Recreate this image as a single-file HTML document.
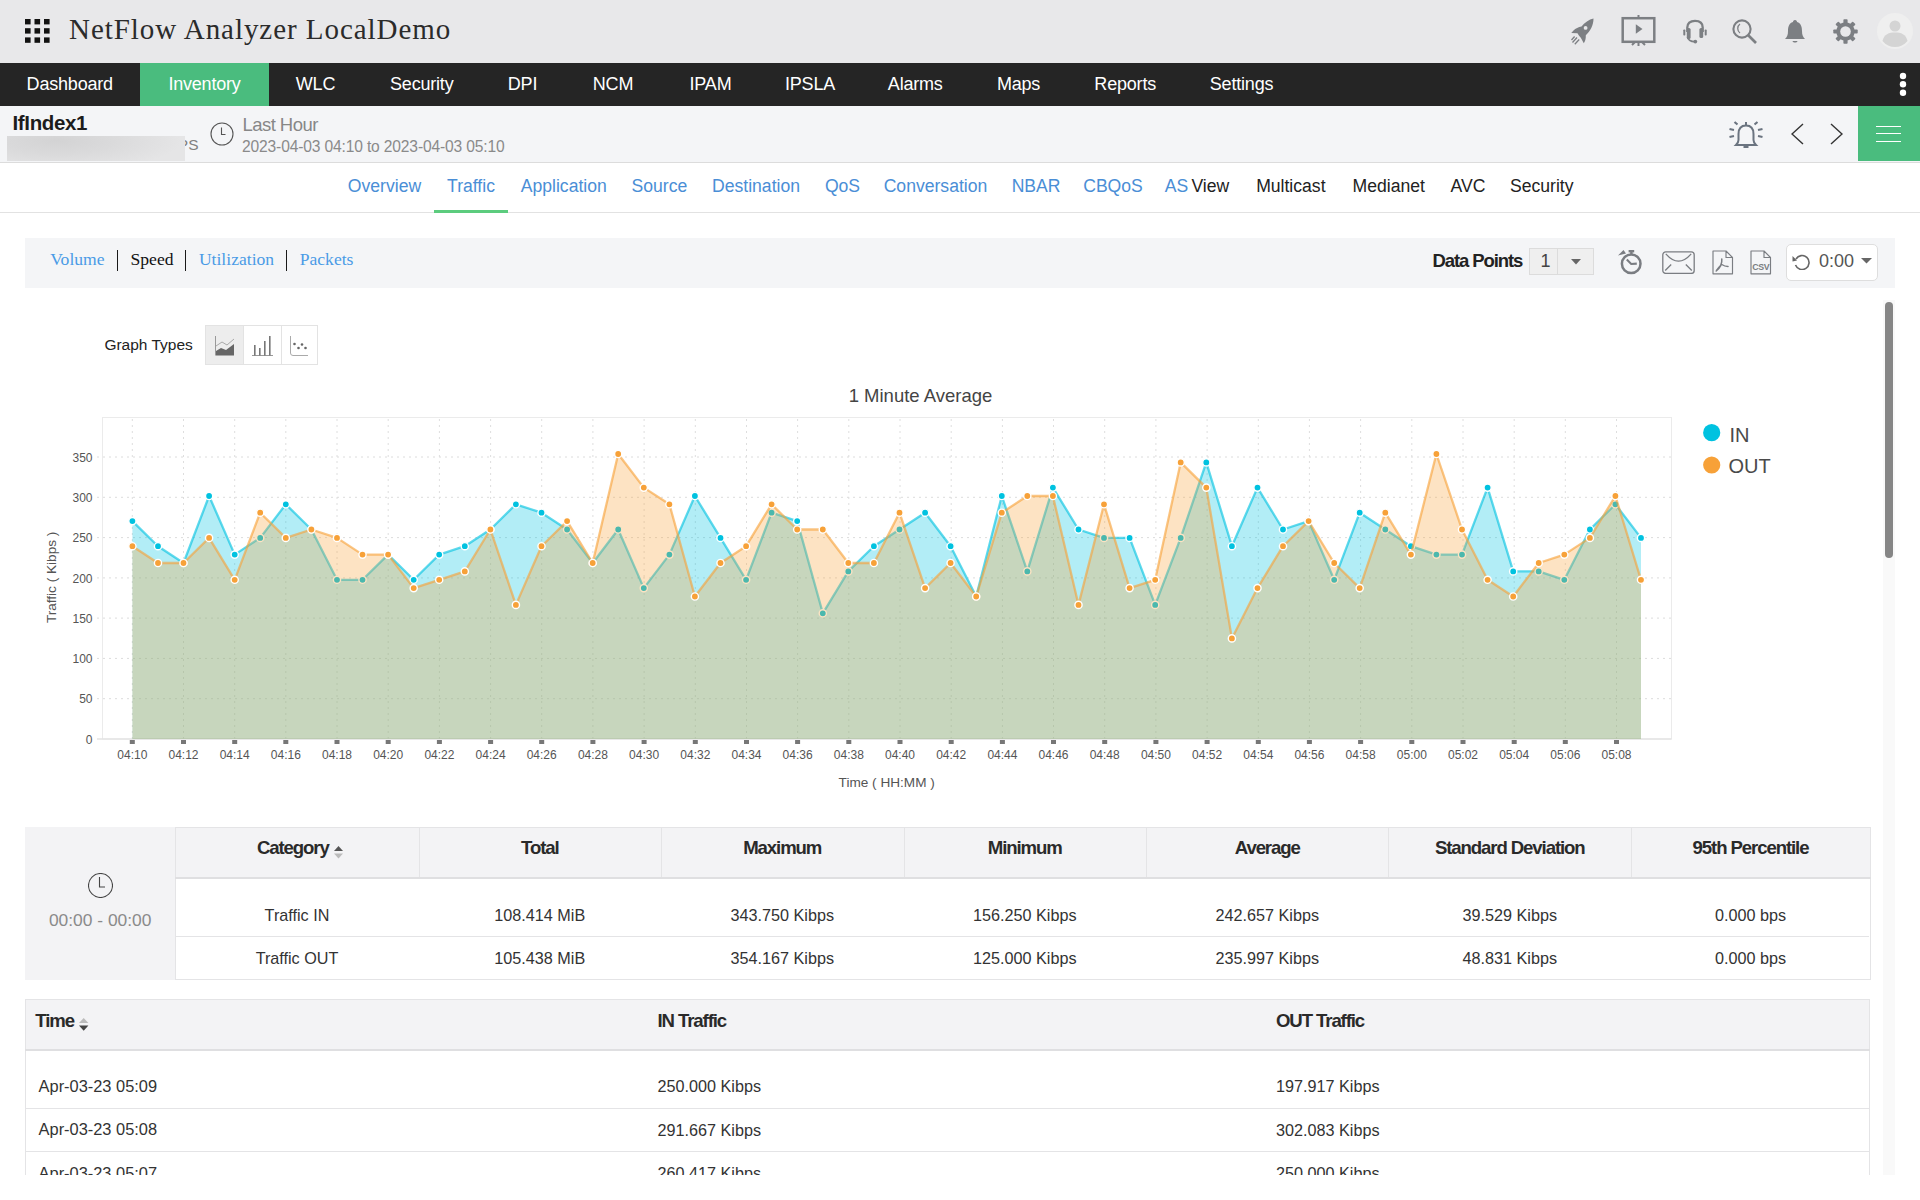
<!DOCTYPE html>
<html><head><meta charset="utf-8"><title>NetFlow Analyzer</title>
<style>
html,body{margin:0;padding:0;width:1920px;height:1200px;overflow:hidden;background:#fff;font-family:'Liberation Sans', sans-serif;}
.t{position:absolute;white-space:nowrap;}
.r{position:absolute;display:block;}
</style></head><body>
<div class="r" style="left:0px;top:0px;width:1920px;height:63px;background:#e8e8ea;"></div>
<svg class="r" style="left:24.5px;top:19px" width="26" height="25" viewBox="0 0 26 25"><rect x="0.0" y="0.0" width="5.6" height="5.4" fill="#111"/><rect x="0.0" y="9.2" width="5.6" height="5.4" fill="#111"/><rect x="0.0" y="18.4" width="5.6" height="5.4" fill="#111"/><rect x="9.5" y="0.0" width="5.6" height="5.4" fill="#111"/><rect x="9.5" y="9.2" width="5.6" height="5.4" fill="#111"/><rect x="9.5" y="18.4" width="5.6" height="5.4" fill="#111"/><rect x="19.0" y="0.0" width="5.6" height="5.4" fill="#111"/><rect x="19.0" y="9.2" width="5.6" height="5.4" fill="#111"/><rect x="19.0" y="18.4" width="5.6" height="5.4" fill="#111"/></svg>
<div class="t" style="top:12.11px;font-size:29px;line-height:34.8px;color:#2b2b2b;font-family:'Liberation Serif', serif;letter-spacing:0.95px;left:69px;">NetFlow Analyzer LocalDemo</div>
<svg class="r" style="left:1570px;top:17.5px" width="26" height="28" viewBox="0 0 26 28"><path d="M23.5 0.5 C19 1.5 14.5 4.5 11.5 8.5 C8.5 9 5.5 10.5 3.5 12.5 C2.5 13.5 1.8 14.5 1.3 15 L7.5 15.3 C8.5 17 9.5 18.5 10.8 19.8 L13.8 25.3 C15 23.5 16 21 15.8 17.2 C20.5 13 23.5 7 23.5 0.5 Z" fill="#7c7f83"/>
<circle cx="15.6" cy="9.9" r="1.9" fill="#e8e8ea"/>
<path d="M7 19.5 L2.5 24.5 M9.2 21.5 L4.8 26.3 M4.6 18.5 L1.5 22" stroke="#7c7f83" stroke-width="1.3"/></svg>
<svg class="r" style="left:1621px;top:15px" width="36" height="32" viewBox="0 0 36 32"><rect x="1.7" y="3.2" width="31.6" height="23.6" fill="none" stroke="#7c7f83" stroke-width="2.5"/>
<path d="M17.5 0 V3 M17.5 27 V31 M11 30 L14 27 M24 30 L21 27" stroke="#7c7f83" stroke-width="2"/>
<path d="M14.8 9.2 L21.5 14 L14.8 18.8 Z" fill="#7c7f83"/></svg>
<svg class="r" style="left:1683px;top:19px" width="25" height="26" viewBox="0 0 25 26"><path d="M4.3 13 V8.5 C4.3 4.5 7 1.8 12 1.8 C17 1.8 19.7 4.5 19.7 8.5 V13" fill="none" stroke="#7c7f83" stroke-width="2.3"/>
<rect x="3.8" y="9" width="3.8" height="11" rx="1.6" fill="#7c7f83"/><rect x="16.4" y="9" width="3.8" height="10" rx="1.6" fill="#7c7f83"/>
<rect x="0.3" y="10.5" width="2" height="6" rx="0.8" fill="#7c7f83"/><rect x="21.7" y="10.5" width="2" height="6" rx="0.8" fill="#7c7f83"/>
<path d="M4.5 18 C5 21 7.5 22.5 12 22.8" fill="none" stroke="#7c7f83" stroke-width="1.6"/>
<circle cx="12.3" cy="22.6" r="1.9" fill="#7c7f83"/></svg>
<svg class="r" style="left:1732px;top:19px" width="26" height="26" viewBox="0 0 26 26"><circle cx="10" cy="10" r="8.6" fill="none" stroke="#7c7f83" stroke-width="2.1"/>
<path d="M16 16 L24 24" stroke="#7c7f83" stroke-width="2.6"/>
<path d="M8 5 C5 7 5 12 8 14" fill="none" stroke="#7c7f83" stroke-width="1.3"/></svg>
<svg class="r" style="left:1785px;top:19px" width="21" height="25" viewBox="0 0 21 25"><path d="M10 1 C11.5 1 12 2 12 3 C16 4 17 8 17 12 C17 16 18 18 20 20 H0 C2 18 3 16 3 12 C3 8 4 4 8 3 C8 2 8.5 1 10 1 Z" fill="#7c7f83"/>
<path d="M7.5 22 C8 24 12 24 12.5 22 Z" fill="#7c7f83"/></svg>
<svg class="r" style="left:1833px;top:19px" width="25" height="25" viewBox="0 0 25 25"><rect x="10.4" y="0.3" width="4.2" height="6" rx="0.8" fill="#7c7f83" transform="rotate(0 12.5 12.5)"/><rect x="10.4" y="0.3" width="4.2" height="6" rx="0.8" fill="#7c7f83" transform="rotate(45 12.5 12.5)"/><rect x="10.4" y="0.3" width="4.2" height="6" rx="0.8" fill="#7c7f83" transform="rotate(90 12.5 12.5)"/><rect x="10.4" y="0.3" width="4.2" height="6" rx="0.8" fill="#7c7f83" transform="rotate(135 12.5 12.5)"/><rect x="10.4" y="0.3" width="4.2" height="6" rx="0.8" fill="#7c7f83" transform="rotate(180 12.5 12.5)"/><rect x="10.4" y="0.3" width="4.2" height="6" rx="0.8" fill="#7c7f83" transform="rotate(225 12.5 12.5)"/><rect x="10.4" y="0.3" width="4.2" height="6" rx="0.8" fill="#7c7f83" transform="rotate(270 12.5 12.5)"/><rect x="10.4" y="0.3" width="4.2" height="6" rx="0.8" fill="#7c7f83" transform="rotate(315 12.5 12.5)"/><circle cx="12.5" cy="12.5" r="9.2" fill="#7c7f83"/><circle cx="12.5" cy="12.5" r="5.3" fill="#e8e8ea"/></svg>
<svg class="r" style="left:1877px;top:13px" width="36" height="36" viewBox="0 0 36 36"><circle cx="18" cy="18" r="18" fill="#efefef"/>
<circle cx="18" cy="13" r="5.5" fill="#d4d4d4"/>
<path d="M5.5 28 C7 21 12 19.5 18 19.5 C24 19.5 29 21 30.5 28 C27 32 23 34 18 34 C13 34 9 32 5.5 28 Z" fill="#d4d4d4"/></svg>
<div class="r" style="left:0px;top:63px;width:1920px;height:43px;background:#252525;"></div>
<div class="r" style="left:140px;top:63px;width:129px;height:43px;background:#4abc7e;"></div>
<div class="t" style="top:73.96px;font-size:18px;line-height:21.6px;color:#ffffff;font-family:'Liberation Sans', sans-serif;letter-spacing:-0.2px;left:-30.25px;width:200px;text-align:center;">Dashboard</div>
<div class="t" style="top:73.96px;font-size:18px;line-height:21.6px;color:#ffffff;font-family:'Liberation Sans', sans-serif;letter-spacing:-0.2px;left:104.50px;width:200px;text-align:center;">Inventory</div>
<div class="t" style="top:73.96px;font-size:18px;line-height:21.6px;color:#ffffff;font-family:'Liberation Sans', sans-serif;letter-spacing:-0.2px;left:215.50px;width:200px;text-align:center;">WLC</div>
<div class="t" style="top:73.96px;font-size:18px;line-height:21.6px;color:#ffffff;font-family:'Liberation Sans', sans-serif;letter-spacing:-0.2px;left:321.75px;width:200px;text-align:center;">Security</div>
<div class="t" style="top:73.96px;font-size:18px;line-height:21.6px;color:#ffffff;font-family:'Liberation Sans', sans-serif;letter-spacing:-0.2px;left:422.50px;width:200px;text-align:center;">DPI</div>
<div class="t" style="top:73.96px;font-size:18px;line-height:21.6px;color:#ffffff;font-family:'Liberation Sans', sans-serif;letter-spacing:-0.2px;left:513.00px;width:200px;text-align:center;">NCM</div>
<div class="t" style="top:73.96px;font-size:18px;line-height:21.6px;color:#ffffff;font-family:'Liberation Sans', sans-serif;letter-spacing:-0.2px;left:610.50px;width:200px;text-align:center;">IPAM</div>
<div class="t" style="top:73.96px;font-size:18px;line-height:21.6px;color:#ffffff;font-family:'Liberation Sans', sans-serif;letter-spacing:-0.2px;left:710.00px;width:200px;text-align:center;">IPSLA</div>
<div class="t" style="top:73.96px;font-size:18px;line-height:21.6px;color:#ffffff;font-family:'Liberation Sans', sans-serif;letter-spacing:-0.2px;left:815.25px;width:200px;text-align:center;">Alarms</div>
<div class="t" style="top:73.96px;font-size:18px;line-height:21.6px;color:#ffffff;font-family:'Liberation Sans', sans-serif;letter-spacing:-0.2px;left:918.50px;width:200px;text-align:center;">Maps</div>
<div class="t" style="top:73.96px;font-size:18px;line-height:21.6px;color:#ffffff;font-family:'Liberation Sans', sans-serif;letter-spacing:-0.2px;left:1025.20px;width:200px;text-align:center;">Reports</div>
<div class="t" style="top:73.96px;font-size:18px;line-height:21.6px;color:#ffffff;font-family:'Liberation Sans', sans-serif;letter-spacing:-0.2px;left:1141.55px;width:200px;text-align:center;">Settings</div>
<svg class="r" style="left:1899px;top:72px" width="8" height="25" viewBox="0 0 8 25"><circle cx="4" cy="4" r="3.2" fill="#fff"/><circle cx="4" cy="12.3" r="3.2" fill="#fff"/><circle cx="4" cy="20.8" r="3.2" fill="#fff"/></svg>
<div class="r" style="left:0px;top:106px;width:1920px;height:56px;background:#f4f5f7;"></div>
<div class="r" style="left:0px;top:162px;width:1920px;height:1px;background:#dcdcdc;"></div>
<div class="t" style="top:111.10px;font-size:20.5px;line-height:24.6px;color:#1c1c1c;font-family:'Liberation Sans', sans-serif;font-weight:700;letter-spacing:-0.35px;left:12.5px;">IfIndex1</div>
<div class="t" style="top:136.33px;font-size:15.5px;line-height:18.6px;color:#808080;font-family:'Liberation Sans', sans-serif;left:138.50px;width:60px;text-align:right;">MBPS</div>
<div class="r" style="left:7px;top:136px;width:178px;height:25px;background:radial-gradient(ellipse 70% 120% at 28% 20%, #d3d3d4 0%, #dadadb 45%, #e5e5e6 100%);filter:blur(0.4px);"></div>
<svg class="r" style="left:210px;top:122px" width="24" height="24" viewBox="0 0 24 24"><circle cx="12" cy="12" r="11" fill="none" stroke="#555" stroke-width="1.1"/><path d="M11.5 5.5 V12.5 H15.5" fill="none" stroke="#555" stroke-width="1.1"/></svg>
<div class="t" style="top:114.29px;font-size:18.5px;line-height:22.2px;color:#878787;font-family:'Liberation Sans', sans-serif;letter-spacing:-0.55px;left:242.5px;">Last Hour</div>
<div class="t" style="top:138.13px;font-size:15.6px;line-height:18.72px;color:#8a8a8a;font-family:'Liberation Sans', sans-serif;letter-spacing:-0.15px;left:242px;">2023-04-03 04:10 to 2023-04-03 05:10</div>
<svg class="r" style="left:1729px;top:120.5px" width="34" height="28" viewBox="0 0 34 28"><path d="M17 4.5 C12 4.5 9.5 8 9.5 13 V19 C9.5 21 8.5 22.5 7 24 H27 C25.5 22.5 24.5 21 24.5 19 V13 C24.5 8 22 4.5 17 4.5 Z" fill="none" stroke="#6b7480" stroke-width="2"/>
<path d="M17 1 V4.5" stroke="#6b7480" stroke-width="2"/>
<path d="M14.5 25 H19.5 V27 H14.5 Z" fill="#6b7480"/>
<path d="M5.5 1 L8.5 3.5 M28.5 1 L25.5 3.5 M0.5 8 L5 9 M33.5 8 L29 9 M0.5 16 L5 15 M33.5 16 L29 15" stroke="#6b7480" stroke-width="2.2"/></svg>
<svg class="r" style="left:1791px;top:123px" width="13" height="22" viewBox="0 0 13 22"><path d="M12 1 L1 11 L12 21" fill="none" stroke="#333" stroke-width="1.4"/></svg>
<svg class="r" style="left:1829.5px;top:123px" width="13" height="22" viewBox="0 0 13 22"><path d="M1 1 L12 11 L1 21" fill="none" stroke="#333" stroke-width="1.4"/></svg>
<div class="r" style="left:1858px;top:106px;width:62px;height:55px;background:#4abc7e;"></div>
<div class="r" style="left:1876px;top:126px;width:25px;height:1.4px;background:#fff;"></div>
<div class="r" style="left:1876px;top:133px;width:25px;height:1.4px;background:#fff;"></div>
<div class="r" style="left:1876px;top:141px;width:25px;height:1.4px;background:#fff;"></div>
<div class="r" style="left:0px;top:212px;width:1920px;height:1px;background:#e2e2e2;"></div>
<div class="t" style="top:176.14px;font-size:17.6px;line-height:21.12px;color:#4a8ed6;font-family:'Liberation Sans', sans-serif;left:284.50px;width:200px;text-align:center;">Overview</div>
<div class="t" style="top:176.14px;font-size:17.6px;line-height:21.12px;color:#4a8ed6;font-family:'Liberation Sans', sans-serif;left:371.00px;width:200px;text-align:center;">Traffic</div>
<div class="t" style="top:176.14px;font-size:17.6px;line-height:21.12px;color:#4a8ed6;font-family:'Liberation Sans', sans-serif;left:463.80px;width:200px;text-align:center;">Application</div>
<div class="t" style="top:176.14px;font-size:17.6px;line-height:21.12px;color:#4a8ed6;font-family:'Liberation Sans', sans-serif;left:559.40px;width:200px;text-align:center;">Source</div>
<div class="t" style="top:176.14px;font-size:17.6px;line-height:21.12px;color:#4a8ed6;font-family:'Liberation Sans', sans-serif;left:656.00px;width:200px;text-align:center;">Destination</div>
<div class="t" style="top:176.14px;font-size:17.6px;line-height:21.12px;color:#4a8ed6;font-family:'Liberation Sans', sans-serif;left:742.50px;width:200px;text-align:center;">QoS</div>
<div class="t" style="top:176.14px;font-size:17.6px;line-height:21.12px;color:#4a8ed6;font-family:'Liberation Sans', sans-serif;left:835.50px;width:200px;text-align:center;">Conversation</div>
<div class="t" style="top:176.14px;font-size:17.6px;line-height:21.12px;color:#4a8ed6;font-family:'Liberation Sans', sans-serif;left:936.10px;width:200px;text-align:center;">NBAR</div>
<div class="t" style="top:176.14px;font-size:17.6px;line-height:21.12px;color:#4a8ed6;font-family:'Liberation Sans', sans-serif;left:1013.00px;width:200px;text-align:center;">CBQoS</div>
<div class="t" style="top:176.14px;font-size:17.6px;line-height:21.12px;color:#4a8ed6;font-family:'Liberation Sans', sans-serif;left:1146.50px;width:60px;text-align:center;">AS</div>
<div class="t" style="top:176.14px;font-size:17.6px;line-height:21.12px;color:#222;font-family:'Liberation Sans', sans-serif;left:1110.30px;width:200px;text-align:center;">View</div>
<div class="t" style="top:176.14px;font-size:17.6px;line-height:21.12px;color:#222;font-family:'Liberation Sans', sans-serif;left:1190.85px;width:200px;text-align:center;">Multicast</div>
<div class="t" style="top:176.14px;font-size:17.6px;line-height:21.12px;color:#222;font-family:'Liberation Sans', sans-serif;left:1288.80px;width:200px;text-align:center;">Medianet</div>
<div class="t" style="top:176.14px;font-size:17.6px;line-height:21.12px;color:#222;font-family:'Liberation Sans', sans-serif;left:1368.00px;width:200px;text-align:center;">AVC</div>
<div class="t" style="top:176.14px;font-size:17.6px;line-height:21.12px;color:#222;font-family:'Liberation Sans', sans-serif;left:1441.75px;width:200px;text-align:center;">Security</div>
<div class="r" style="left:434px;top:210px;width:74px;height:3px;background:#5ccc7e;"></div>
<div class="r" style="left:25px;top:238px;width:1870px;height:50px;background:#f4f5f7;"></div>
<div class="t" style="top:249.10px;font-size:17.6px;line-height:21.12px;color:#4a9be6;font-family:'Liberation Serif', serif;left:-2.60px;width:160px;text-align:center;">Volume</div>
<div class="t" style="top:249.10px;font-size:17.6px;line-height:21.12px;color:#111;font-family:'Liberation Serif', serif;left:72.00px;width:160px;text-align:center;">Speed</div>
<div class="t" style="top:249.10px;font-size:17.6px;line-height:21.12px;color:#4a9be6;font-family:'Liberation Serif', serif;left:156.50px;width:160px;text-align:center;">Utilization</div>
<div class="t" style="top:249.10px;font-size:17.6px;line-height:21.12px;color:#4a9be6;font-family:'Liberation Serif', serif;left:246.60px;width:160px;text-align:center;">Packets</div>
<div class="r" style="left:117px;top:250px;width:1.2px;height:21px;background:#1a1a1a;"></div>
<div class="r" style="left:185px;top:250px;width:1.2px;height:21px;background:#1a1a1a;"></div>
<div class="r" style="left:286px;top:250px;width:1.2px;height:21px;background:#1a1a1a;"></div>
<div class="t" style="top:249.99px;font-size:18.5px;line-height:22.2px;color:#222;font-family:'Liberation Sans', sans-serif;font-weight:700;letter-spacing:-1.1px;left:1432.5px;">Data Points</div>
<div class="r" style="left:1529px;top:248px;width:65px;height:27px;background:#efefef;box-sizing:border-box;border:1px solid #dcdcdc;"></div>
<div class="r" style="left:1557px;top:248px;width:1px;height:27px;background:#dcdcdc;"></div>
<div class="t" style="top:251.46px;font-size:18px;line-height:21.6px;color:#444;font-family:'Liberation Sans', sans-serif;left:1535.50px;width:20px;text-align:center;">1</div>
<svg class="r" style="left:1571px;top:259px" width="10" height="6" viewBox="0 0 10 6"><path d="M0 0 H10 L5 5.5 Z" fill="#666"/></svg>
<svg class="r" style="left:1617px;top:249.5px" width="27" height="25" viewBox="0 0 27 25"><circle cx="14.2" cy="13.8" r="9.3" fill="none" stroke="#7a7d82" stroke-width="2.5"/>
<path d="M9.8 9.6 L14.2 14 L19.8 13.6" fill="none" stroke="#7a7d82" stroke-width="2.1"/>
<path d="M1 5.5 L6.5 0 L9 3.5 Z" fill="#7a7d82"/>
<rect x="11.6" y="-0.2" width="5.6" height="2.6" fill="#7a7d82"/><rect x="13.2" y="2" width="2.4" height="2.6" fill="#7a7d82"/></svg>
<svg class="r" style="left:1662px;top:251px" width="33" height="23" viewBox="0 0 33 23"><rect x="0.8" y="0.8" width="31.4" height="21.6" rx="3" fill="none" stroke="#7a7d82" stroke-width="1.3"/>
<path d="M3.8 2.9 Q16.5 17.5 29.2 2.9 M3.2 19.5 L9.2 13.5 M29.8 19.5 L23.8 13.5" fill="none" stroke="#7a7d82" stroke-width="1.3"/></svg>
<svg class="r" style="left:1712px;top:249.5px" width="22" height="25" viewBox="0 0 22 25"><path d="M1 1 H14 L20.5 7.5 V23.8 H1 Z M14 1 V7.5 H20.5" fill="none" stroke="#7a7d82" stroke-width="1.15" stroke-linejoin="round"/>
<path d="M9.8 9 C10.2 13 9 17 4.2 21 M9.8 14.5 C12 16 14 16.5 16 16.5 M9.5 14.5 C8 16 7 17 4.5 20.5" fill="none" stroke="#7a7d82" stroke-width="1.5" stroke-linecap="round"/></svg>
<svg class="r" style="left:1750px;top:249.5px" width="22" height="25" viewBox="0 0 22 25"><path d="M1 1 H14 L20.5 7.5 V23.8 H1 Z M14 1 V7.5 H20.5" fill="none" stroke="#7a7d82" stroke-width="1.15" stroke-linejoin="round"/>
<text x="10.8" y="20.3" font-family="Liberation Sans" font-weight="700" font-size="8.8" letter-spacing="-0.4" fill="#7a7d82" text-anchor="middle">CSV</text></svg>
<div class="r" style="left:1786px;top:244px;width:92px;height:36.5px;background:#ffffff;box-sizing:border-box;border:1px solid #dedede;border-radius:5px;"></div>
<svg class="r" style="left:1792px;top:253px" width="18" height="17" viewBox="0 0 18 17"><path d="M4 6 A7 7 0 1 1 3.5 12" fill="none" stroke="#666" stroke-width="1.6"/>
<path d="M0.5 3 L5 7.5 L0.5 8.5 Z" fill="#666"/></svg>
<div class="t" style="top:250.96px;font-size:18px;line-height:21.6px;color:#555;font-family:'Liberation Sans', sans-serif;left:1811.50px;width:50px;text-align:center;">0:00</div>
<svg class="r" style="left:1861px;top:258px" width="11" height="6" viewBox="0 0 11 6"><path d="M0 0 H11 L5.5 5.5 Z" fill="#666"/></svg>
<div class="r" style="left:1883px;top:300px;width:12px;height:875px;background:#f9f9f9;"></div>
<div class="r" style="left:1885px;top:302px;width:8px;height:256px;background:#868686;border-radius:4px;"></div>
<div class="t" style="top:335.73px;font-size:15.5px;line-height:18.6px;color:#222;font-family:'Liberation Sans', sans-serif;left:104.4px;">Graph Types</div>
<div class="r" style="left:205px;top:325px;width:113px;height:40px;background:#fff;box-sizing:border-box;border:1px solid #e3e3e3;"></div>
<div class="r" style="left:206px;top:326px;width:36.5px;height:38px;background:#ededed;"></div>
<div class="r" style="left:242.5px;top:326px;width:1px;height:38px;background:#e3e3e3;"></div>
<div class="r" style="left:280.5px;top:326px;width:1px;height:38px;background:#e3e3e3;"></div>
<svg class="r" style="left:215px;top:336px" width="20" height="20" viewBox="0 0 20 20"><path d="M0.5 0 V19.5" stroke="#999" stroke-width="1"/>
<path d="M1 10 L7 6 L12 9 L19 3" fill="none" stroke="#aaa" stroke-width="1"/>
<path d="M1 19.5 V15 L6 12 L11 14 L19 8 V19.5 Z" fill="#666"/></svg>
<svg class="r" style="left:252px;top:336px" width="21" height="20" viewBox="0 0 21 20"><path d="M0 19.5 H21" stroke="#999" stroke-width="1"/>
<rect x="2" y="9" width="1.6" height="10.5" fill="#777"/><rect x="7" y="12" width="1.6" height="7.5" fill="#777"/>
<rect x="12" y="5" width="1.6" height="14.5" fill="#777"/><rect x="17" y="0" width="1.6" height="19.5" fill="#777"/></svg>
<svg class="r" style="left:289.5px;top:336px" width="19" height="20" viewBox="0 0 19 20"><path d="M0.5 0 V17 Q0.5 19.5 3 19.5 H18" fill="none" stroke="#aaa" stroke-width="1"/>
<circle cx="4.5" cy="8" r="1.3" fill="#666"/><circle cx="8.5" cy="12" r="1.3" fill="#666"/><circle cx="12" cy="8.5" r="1.3" fill="#666"/><circle cx="15.5" cy="12" r="1.3" fill="#666"/></svg>
<svg class="r" style="left:0;top:370px" width="1880" height="430" viewBox="0 370 1880 430"><rect x="102.5" y="417.5" width="1569.0" height="321.5" fill="none" stroke="#ebebeb" stroke-width="1"/><path d="M97 739 H1671.5" stroke="#e3e3e3" stroke-width="1.5"/><text x="92.5" y="743.6" text-anchor="end" font-family="Liberation Sans" font-size="12" fill="#555">0</text><path d="M97 698.7 H1671.5" stroke="#dcdcdc" stroke-width="1" stroke-dasharray="2,4"/><text x="92.5" y="703.3" text-anchor="end" font-family="Liberation Sans" font-size="12" fill="#555">50</text><path d="M97 658.4 H1671.5" stroke="#dcdcdc" stroke-width="1" stroke-dasharray="2,4"/><text x="92.5" y="663.0" text-anchor="end" font-family="Liberation Sans" font-size="12" fill="#555">100</text><path d="M97 618.1 H1671.5" stroke="#dcdcdc" stroke-width="1" stroke-dasharray="2,4"/><text x="92.5" y="622.7" text-anchor="end" font-family="Liberation Sans" font-size="12" fill="#555">150</text><path d="M97 577.9 H1671.5" stroke="#dcdcdc" stroke-width="1" stroke-dasharray="2,4"/><text x="92.5" y="582.5" text-anchor="end" font-family="Liberation Sans" font-size="12" fill="#555">200</text><path d="M97 537.6 H1671.5" stroke="#dcdcdc" stroke-width="1" stroke-dasharray="2,4"/><text x="92.5" y="542.2" text-anchor="end" font-family="Liberation Sans" font-size="12" fill="#555">250</text><path d="M97 497.3 H1671.5" stroke="#dcdcdc" stroke-width="1" stroke-dasharray="2,4"/><text x="92.5" y="501.9" text-anchor="end" font-family="Liberation Sans" font-size="12" fill="#555">300</text><path d="M97 457.0 H1671.5" stroke="#dcdcdc" stroke-width="1" stroke-dasharray="2,4"/><text x="92.5" y="461.6" text-anchor="end" font-family="Liberation Sans" font-size="12" fill="#555">350</text><path d="M132.3 419.0 V739" stroke="#dedede" stroke-width="1" stroke-dasharray="2,4"/><rect x="129.8" y="740" width="5" height="4" fill="#777"/><text x="132.3" y="758.8" text-anchor="middle" font-family="Liberation Sans" font-size="12" fill="#555">04:10</text><path d="M183.5 419.0 V739" stroke="#dedede" stroke-width="1" stroke-dasharray="2,4"/><rect x="181.0" y="740" width="5" height="4" fill="#777"/><text x="183.5" y="758.8" text-anchor="middle" font-family="Liberation Sans" font-size="12" fill="#555">04:12</text><path d="M234.7 419.0 V739" stroke="#dedede" stroke-width="1" stroke-dasharray="2,4"/><rect x="232.2" y="740" width="5" height="4" fill="#777"/><text x="234.7" y="758.8" text-anchor="middle" font-family="Liberation Sans" font-size="12" fill="#555">04:14</text><path d="M285.8 419.0 V739" stroke="#dedede" stroke-width="1" stroke-dasharray="2,4"/><rect x="283.3" y="740" width="5" height="4" fill="#777"/><text x="285.8" y="758.8" text-anchor="middle" font-family="Liberation Sans" font-size="12" fill="#555">04:16</text><path d="M337.0 419.0 V739" stroke="#dedede" stroke-width="1" stroke-dasharray="2,4"/><rect x="334.5" y="740" width="5" height="4" fill="#777"/><text x="337.0" y="758.8" text-anchor="middle" font-family="Liberation Sans" font-size="12" fill="#555">04:18</text><path d="M388.2 419.0 V739" stroke="#dedede" stroke-width="1" stroke-dasharray="2,4"/><rect x="385.7" y="740" width="5" height="4" fill="#777"/><text x="388.2" y="758.8" text-anchor="middle" font-family="Liberation Sans" font-size="12" fill="#555">04:20</text><path d="M439.4 419.0 V739" stroke="#dedede" stroke-width="1" stroke-dasharray="2,4"/><rect x="436.9" y="740" width="5" height="4" fill="#777"/><text x="439.4" y="758.8" text-anchor="middle" font-family="Liberation Sans" font-size="12" fill="#555">04:22</text><path d="M490.6 419.0 V739" stroke="#dedede" stroke-width="1" stroke-dasharray="2,4"/><rect x="488.1" y="740" width="5" height="4" fill="#777"/><text x="490.6" y="758.8" text-anchor="middle" font-family="Liberation Sans" font-size="12" fill="#555">04:24</text><path d="M541.7 419.0 V739" stroke="#dedede" stroke-width="1" stroke-dasharray="2,4"/><rect x="539.2" y="740" width="5" height="4" fill="#777"/><text x="541.7" y="758.8" text-anchor="middle" font-family="Liberation Sans" font-size="12" fill="#555">04:26</text><path d="M592.9 419.0 V739" stroke="#dedede" stroke-width="1" stroke-dasharray="2,4"/><rect x="590.4" y="740" width="5" height="4" fill="#777"/><text x="592.9" y="758.8" text-anchor="middle" font-family="Liberation Sans" font-size="12" fill="#555">04:28</text><path d="M644.1 419.0 V739" stroke="#dedede" stroke-width="1" stroke-dasharray="2,4"/><rect x="641.6" y="740" width="5" height="4" fill="#777"/><text x="644.1" y="758.8" text-anchor="middle" font-family="Liberation Sans" font-size="12" fill="#555">04:30</text><path d="M695.3 419.0 V739" stroke="#dedede" stroke-width="1" stroke-dasharray="2,4"/><rect x="692.8" y="740" width="5" height="4" fill="#777"/><text x="695.3" y="758.8" text-anchor="middle" font-family="Liberation Sans" font-size="12" fill="#555">04:32</text><path d="M746.5 419.0 V739" stroke="#dedede" stroke-width="1" stroke-dasharray="2,4"/><rect x="744.0" y="740" width="5" height="4" fill="#777"/><text x="746.5" y="758.8" text-anchor="middle" font-family="Liberation Sans" font-size="12" fill="#555">04:34</text><path d="M797.6 419.0 V739" stroke="#dedede" stroke-width="1" stroke-dasharray="2,4"/><rect x="795.1" y="740" width="5" height="4" fill="#777"/><text x="797.6" y="758.8" text-anchor="middle" font-family="Liberation Sans" font-size="12" fill="#555">04:36</text><path d="M848.8 419.0 V739" stroke="#dedede" stroke-width="1" stroke-dasharray="2,4"/><rect x="846.3" y="740" width="5" height="4" fill="#777"/><text x="848.8" y="758.8" text-anchor="middle" font-family="Liberation Sans" font-size="12" fill="#555">04:38</text><path d="M900.0 419.0 V739" stroke="#dedede" stroke-width="1" stroke-dasharray="2,4"/><rect x="897.5" y="740" width="5" height="4" fill="#777"/><text x="900.0" y="758.8" text-anchor="middle" font-family="Liberation Sans" font-size="12" fill="#555">04:40</text><path d="M951.2 419.0 V739" stroke="#dedede" stroke-width="1" stroke-dasharray="2,4"/><rect x="948.7" y="740" width="5" height="4" fill="#777"/><text x="951.2" y="758.8" text-anchor="middle" font-family="Liberation Sans" font-size="12" fill="#555">04:42</text><path d="M1002.4 419.0 V739" stroke="#dedede" stroke-width="1" stroke-dasharray="2,4"/><rect x="999.9" y="740" width="5" height="4" fill="#777"/><text x="1002.4" y="758.8" text-anchor="middle" font-family="Liberation Sans" font-size="12" fill="#555">04:44</text><path d="M1053.5 419.0 V739" stroke="#dedede" stroke-width="1" stroke-dasharray="2,4"/><rect x="1051.0" y="740" width="5" height="4" fill="#777"/><text x="1053.5" y="758.8" text-anchor="middle" font-family="Liberation Sans" font-size="12" fill="#555">04:46</text><path d="M1104.7 419.0 V739" stroke="#dedede" stroke-width="1" stroke-dasharray="2,4"/><rect x="1102.2" y="740" width="5" height="4" fill="#777"/><text x="1104.7" y="758.8" text-anchor="middle" font-family="Liberation Sans" font-size="12" fill="#555">04:48</text><path d="M1155.9 419.0 V739" stroke="#dedede" stroke-width="1" stroke-dasharray="2,4"/><rect x="1153.4" y="740" width="5" height="4" fill="#777"/><text x="1155.9" y="758.8" text-anchor="middle" font-family="Liberation Sans" font-size="12" fill="#555">04:50</text><path d="M1207.1 419.0 V739" stroke="#dedede" stroke-width="1" stroke-dasharray="2,4"/><rect x="1204.6" y="740" width="5" height="4" fill="#777"/><text x="1207.1" y="758.8" text-anchor="middle" font-family="Liberation Sans" font-size="12" fill="#555">04:52</text><path d="M1258.3 419.0 V739" stroke="#dedede" stroke-width="1" stroke-dasharray="2,4"/><rect x="1255.8" y="740" width="5" height="4" fill="#777"/><text x="1258.3" y="758.8" text-anchor="middle" font-family="Liberation Sans" font-size="12" fill="#555">04:54</text><path d="M1309.4 419.0 V739" stroke="#dedede" stroke-width="1" stroke-dasharray="2,4"/><rect x="1306.9" y="740" width="5" height="4" fill="#777"/><text x="1309.4" y="758.8" text-anchor="middle" font-family="Liberation Sans" font-size="12" fill="#555">04:56</text><path d="M1360.6 419.0 V739" stroke="#dedede" stroke-width="1" stroke-dasharray="2,4"/><rect x="1358.1" y="740" width="5" height="4" fill="#777"/><text x="1360.6" y="758.8" text-anchor="middle" font-family="Liberation Sans" font-size="12" fill="#555">04:58</text><path d="M1411.8 419.0 V739" stroke="#dedede" stroke-width="1" stroke-dasharray="2,4"/><rect x="1409.3" y="740" width="5" height="4" fill="#777"/><text x="1411.8" y="758.8" text-anchor="middle" font-family="Liberation Sans" font-size="12" fill="#555">05:00</text><path d="M1463.0 419.0 V739" stroke="#dedede" stroke-width="1" stroke-dasharray="2,4"/><rect x="1460.5" y="740" width="5" height="4" fill="#777"/><text x="1463.0" y="758.8" text-anchor="middle" font-family="Liberation Sans" font-size="12" fill="#555">05:02</text><path d="M1514.2 419.0 V739" stroke="#dedede" stroke-width="1" stroke-dasharray="2,4"/><rect x="1511.7" y="740" width="5" height="4" fill="#777"/><text x="1514.2" y="758.8" text-anchor="middle" font-family="Liberation Sans" font-size="12" fill="#555">05:04</text><path d="M1565.3 419.0 V739" stroke="#dedede" stroke-width="1" stroke-dasharray="2,4"/><rect x="1562.8" y="740" width="5" height="4" fill="#777"/><text x="1565.3" y="758.8" text-anchor="middle" font-family="Liberation Sans" font-size="12" fill="#555">05:06</text><path d="M1616.5 419.0 V739" stroke="#dedede" stroke-width="1" stroke-dasharray="2,4"/><rect x="1614.0" y="740" width="5" height="4" fill="#777"/><text x="1616.5" y="758.8" text-anchor="middle" font-family="Liberation Sans" font-size="12" fill="#555">05:08</text><polygon points="132.4,739 132.4,521.1 158.0,546.2 183.5,563.0 209.1,496.0 234.7,554.6 260.2,537.9 285.8,504.3 311.4,529.5 337.0,579.8 362.5,579.8 388.1,554.6 413.7,579.8 439.2,554.6 464.8,546.2 490.4,529.5 515.9,504.3 541.5,512.7 567.1,529.5 592.7,563.0 618.2,529.5 643.8,588.1 669.4,554.6 694.9,496.0 720.5,537.9 746.1,579.8 771.6,512.7 797.2,521.1 822.8,613.3 848.3,571.4 873.9,546.2 899.5,529.5 925.1,512.7 950.6,546.2 976.2,596.5 1001.8,496.0 1027.3,571.4 1052.9,487.6 1078.5,529.5 1104.0,537.9 1129.6,537.9 1155.2,604.9 1180.7,537.9 1206.3,462.4 1231.9,546.2 1257.5,487.6 1283.0,529.5 1308.6,521.1 1334.2,579.8 1359.7,512.7 1385.3,529.5 1410.9,546.2 1436.4,554.6 1462.0,554.6 1487.6,487.6 1513.2,571.4 1538.7,571.4 1564.3,579.8 1589.9,529.5 1615.4,504.3 1641.0,537.9 1641.0,739" fill="#00c2e0" fill-opacity="0.3"/><polyline points="132.4,521.1 158.0,546.2 183.5,563.0 209.1,496.0 234.7,554.6 260.2,537.9 285.8,504.3 311.4,529.5 337.0,579.8 362.5,579.8 388.1,554.6 413.7,579.8 439.2,554.6 464.8,546.2 490.4,529.5 515.9,504.3 541.5,512.7 567.1,529.5 592.7,563.0 618.2,529.5 643.8,588.1 669.4,554.6 694.9,496.0 720.5,537.9 746.1,579.8 771.6,512.7 797.2,521.1 822.8,613.3 848.3,571.4 873.9,546.2 899.5,529.5 925.1,512.7 950.6,546.2 976.2,596.5 1001.8,496.0 1027.3,571.4 1052.9,487.6 1078.5,529.5 1104.0,537.9 1129.6,537.9 1155.2,604.9 1180.7,537.9 1206.3,462.4 1231.9,546.2 1257.5,487.6 1283.0,529.5 1308.6,521.1 1334.2,579.8 1359.7,512.7 1385.3,529.5 1410.9,546.2 1436.4,554.6 1462.0,554.6 1487.6,487.6 1513.2,571.4 1538.7,571.4 1564.3,579.8 1589.9,529.5 1615.4,504.3 1641.0,537.9" fill="none" stroke="#00c2e0" stroke-opacity="0.62" stroke-width="2.3" stroke-linejoin="round"/><circle cx="132.4" cy="521.1" r="3.6" fill="#00c2e0" stroke="#fff" stroke-width="1.4"/><circle cx="158.0" cy="546.2" r="3.6" fill="#00c2e0" stroke="#fff" stroke-width="1.4"/><circle cx="183.5" cy="563.0" r="3.6" fill="#00c2e0" stroke="#fff" stroke-width="1.4"/><circle cx="209.1" cy="496.0" r="3.6" fill="#00c2e0" stroke="#fff" stroke-width="1.4"/><circle cx="234.7" cy="554.6" r="3.6" fill="#00c2e0" stroke="#fff" stroke-width="1.4"/><circle cx="260.2" cy="537.9" r="3.6" fill="#00c2e0" stroke="#fff" stroke-width="1.4"/><circle cx="285.8" cy="504.3" r="3.6" fill="#00c2e0" stroke="#fff" stroke-width="1.4"/><circle cx="311.4" cy="529.5" r="3.6" fill="#00c2e0" stroke="#fff" stroke-width="1.4"/><circle cx="337.0" cy="579.8" r="3.6" fill="#00c2e0" stroke="#fff" stroke-width="1.4"/><circle cx="362.5" cy="579.8" r="3.6" fill="#00c2e0" stroke="#fff" stroke-width="1.4"/><circle cx="388.1" cy="554.6" r="3.6" fill="#00c2e0" stroke="#fff" stroke-width="1.4"/><circle cx="413.7" cy="579.8" r="3.6" fill="#00c2e0" stroke="#fff" stroke-width="1.4"/><circle cx="439.2" cy="554.6" r="3.6" fill="#00c2e0" stroke="#fff" stroke-width="1.4"/><circle cx="464.8" cy="546.2" r="3.6" fill="#00c2e0" stroke="#fff" stroke-width="1.4"/><circle cx="490.4" cy="529.5" r="3.6" fill="#00c2e0" stroke="#fff" stroke-width="1.4"/><circle cx="515.9" cy="504.3" r="3.6" fill="#00c2e0" stroke="#fff" stroke-width="1.4"/><circle cx="541.5" cy="512.7" r="3.6" fill="#00c2e0" stroke="#fff" stroke-width="1.4"/><circle cx="567.1" cy="529.5" r="3.6" fill="#00c2e0" stroke="#fff" stroke-width="1.4"/><circle cx="592.7" cy="563.0" r="3.6" fill="#00c2e0" stroke="#fff" stroke-width="1.4"/><circle cx="618.2" cy="529.5" r="3.6" fill="#00c2e0" stroke="#fff" stroke-width="1.4"/><circle cx="643.8" cy="588.1" r="3.6" fill="#00c2e0" stroke="#fff" stroke-width="1.4"/><circle cx="669.4" cy="554.6" r="3.6" fill="#00c2e0" stroke="#fff" stroke-width="1.4"/><circle cx="694.9" cy="496.0" r="3.6" fill="#00c2e0" stroke="#fff" stroke-width="1.4"/><circle cx="720.5" cy="537.9" r="3.6" fill="#00c2e0" stroke="#fff" stroke-width="1.4"/><circle cx="746.1" cy="579.8" r="3.6" fill="#00c2e0" stroke="#fff" stroke-width="1.4"/><circle cx="771.6" cy="512.7" r="3.6" fill="#00c2e0" stroke="#fff" stroke-width="1.4"/><circle cx="797.2" cy="521.1" r="3.6" fill="#00c2e0" stroke="#fff" stroke-width="1.4"/><circle cx="822.8" cy="613.3" r="3.6" fill="#00c2e0" stroke="#fff" stroke-width="1.4"/><circle cx="848.3" cy="571.4" r="3.6" fill="#00c2e0" stroke="#fff" stroke-width="1.4"/><circle cx="873.9" cy="546.2" r="3.6" fill="#00c2e0" stroke="#fff" stroke-width="1.4"/><circle cx="899.5" cy="529.5" r="3.6" fill="#00c2e0" stroke="#fff" stroke-width="1.4"/><circle cx="925.1" cy="512.7" r="3.6" fill="#00c2e0" stroke="#fff" stroke-width="1.4"/><circle cx="950.6" cy="546.2" r="3.6" fill="#00c2e0" stroke="#fff" stroke-width="1.4"/><circle cx="976.2" cy="596.5" r="3.6" fill="#00c2e0" stroke="#fff" stroke-width="1.4"/><circle cx="1001.8" cy="496.0" r="3.6" fill="#00c2e0" stroke="#fff" stroke-width="1.4"/><circle cx="1027.3" cy="571.4" r="3.6" fill="#00c2e0" stroke="#fff" stroke-width="1.4"/><circle cx="1052.9" cy="487.6" r="3.6" fill="#00c2e0" stroke="#fff" stroke-width="1.4"/><circle cx="1078.5" cy="529.5" r="3.6" fill="#00c2e0" stroke="#fff" stroke-width="1.4"/><circle cx="1104.0" cy="537.9" r="3.6" fill="#00c2e0" stroke="#fff" stroke-width="1.4"/><circle cx="1129.6" cy="537.9" r="3.6" fill="#00c2e0" stroke="#fff" stroke-width="1.4"/><circle cx="1155.2" cy="604.9" r="3.6" fill="#00c2e0" stroke="#fff" stroke-width="1.4"/><circle cx="1180.7" cy="537.9" r="3.6" fill="#00c2e0" stroke="#fff" stroke-width="1.4"/><circle cx="1206.3" cy="462.4" r="3.6" fill="#00c2e0" stroke="#fff" stroke-width="1.4"/><circle cx="1231.9" cy="546.2" r="3.6" fill="#00c2e0" stroke="#fff" stroke-width="1.4"/><circle cx="1257.5" cy="487.6" r="3.6" fill="#00c2e0" stroke="#fff" stroke-width="1.4"/><circle cx="1283.0" cy="529.5" r="3.6" fill="#00c2e0" stroke="#fff" stroke-width="1.4"/><circle cx="1308.6" cy="521.1" r="3.6" fill="#00c2e0" stroke="#fff" stroke-width="1.4"/><circle cx="1334.2" cy="579.8" r="3.6" fill="#00c2e0" stroke="#fff" stroke-width="1.4"/><circle cx="1359.7" cy="512.7" r="3.6" fill="#00c2e0" stroke="#fff" stroke-width="1.4"/><circle cx="1385.3" cy="529.5" r="3.6" fill="#00c2e0" stroke="#fff" stroke-width="1.4"/><circle cx="1410.9" cy="546.2" r="3.6" fill="#00c2e0" stroke="#fff" stroke-width="1.4"/><circle cx="1436.4" cy="554.6" r="3.6" fill="#00c2e0" stroke="#fff" stroke-width="1.4"/><circle cx="1462.0" cy="554.6" r="3.6" fill="#00c2e0" stroke="#fff" stroke-width="1.4"/><circle cx="1487.6" cy="487.6" r="3.6" fill="#00c2e0" stroke="#fff" stroke-width="1.4"/><circle cx="1513.2" cy="571.4" r="3.6" fill="#00c2e0" stroke="#fff" stroke-width="1.4"/><circle cx="1538.7" cy="571.4" r="3.6" fill="#00c2e0" stroke="#fff" stroke-width="1.4"/><circle cx="1564.3" cy="579.8" r="3.6" fill="#00c2e0" stroke="#fff" stroke-width="1.4"/><circle cx="1589.9" cy="529.5" r="3.6" fill="#00c2e0" stroke="#fff" stroke-width="1.4"/><circle cx="1615.4" cy="504.3" r="3.6" fill="#00c2e0" stroke="#fff" stroke-width="1.4"/><circle cx="1641.0" cy="537.9" r="3.6" fill="#00c2e0" stroke="#fff" stroke-width="1.4"/><polygon points="132.4,739 132.4,546.2 158.0,563.0 183.5,563.0 209.1,537.9 234.7,579.8 260.2,512.7 285.8,537.9 311.4,529.5 337.0,537.9 362.5,554.6 388.1,554.6 413.7,588.1 439.2,579.8 464.8,571.4 490.4,529.5 515.9,604.9 541.5,546.2 567.1,521.1 592.7,563.0 618.2,454.0 643.8,487.6 669.4,504.3 694.9,596.5 720.5,563.0 746.1,546.2 771.6,504.3 797.2,529.5 822.8,529.5 848.3,563.0 873.9,563.0 899.5,512.7 925.1,588.1 950.6,563.0 976.2,596.5 1001.8,512.7 1027.3,496.0 1052.9,496.0 1078.5,604.9 1104.0,504.3 1129.6,588.1 1155.2,579.8 1180.7,462.4 1206.3,487.6 1231.9,638.4 1257.5,588.1 1283.0,546.2 1308.6,521.1 1334.2,563.0 1359.7,588.1 1385.3,512.7 1410.9,554.6 1436.4,454.0 1462.0,529.5 1487.6,579.8 1513.2,596.5 1538.7,563.0 1564.3,554.6 1589.9,537.9 1615.4,496.0 1641.0,579.8 1641.0,739" fill="#f7a138" fill-opacity="0.3"/><polyline points="132.4,546.2 158.0,563.0 183.5,563.0 209.1,537.9 234.7,579.8 260.2,512.7 285.8,537.9 311.4,529.5 337.0,537.9 362.5,554.6 388.1,554.6 413.7,588.1 439.2,579.8 464.8,571.4 490.4,529.5 515.9,604.9 541.5,546.2 567.1,521.1 592.7,563.0 618.2,454.0 643.8,487.6 669.4,504.3 694.9,596.5 720.5,563.0 746.1,546.2 771.6,504.3 797.2,529.5 822.8,529.5 848.3,563.0 873.9,563.0 899.5,512.7 925.1,588.1 950.6,563.0 976.2,596.5 1001.8,512.7 1027.3,496.0 1052.9,496.0 1078.5,604.9 1104.0,504.3 1129.6,588.1 1155.2,579.8 1180.7,462.4 1206.3,487.6 1231.9,638.4 1257.5,588.1 1283.0,546.2 1308.6,521.1 1334.2,563.0 1359.7,588.1 1385.3,512.7 1410.9,554.6 1436.4,454.0 1462.0,529.5 1487.6,579.8 1513.2,596.5 1538.7,563.0 1564.3,554.6 1589.9,537.9 1615.4,496.0 1641.0,579.8" fill="none" stroke="#f7a138" stroke-opacity="0.62" stroke-width="2.3" stroke-linejoin="round"/><circle cx="132.4" cy="546.2" r="3.6" fill="#f7a138" stroke="#fff" stroke-width="1.4"/><circle cx="158.0" cy="563.0" r="3.6" fill="#f7a138" stroke="#fff" stroke-width="1.4"/><circle cx="183.5" cy="563.0" r="3.6" fill="#f7a138" stroke="#fff" stroke-width="1.4"/><circle cx="209.1" cy="537.9" r="3.6" fill="#f7a138" stroke="#fff" stroke-width="1.4"/><circle cx="234.7" cy="579.8" r="3.6" fill="#f7a138" stroke="#fff" stroke-width="1.4"/><circle cx="260.2" cy="512.7" r="3.6" fill="#f7a138" stroke="#fff" stroke-width="1.4"/><circle cx="285.8" cy="537.9" r="3.6" fill="#f7a138" stroke="#fff" stroke-width="1.4"/><circle cx="311.4" cy="529.5" r="3.6" fill="#f7a138" stroke="#fff" stroke-width="1.4"/><circle cx="337.0" cy="537.9" r="3.6" fill="#f7a138" stroke="#fff" stroke-width="1.4"/><circle cx="362.5" cy="554.6" r="3.6" fill="#f7a138" stroke="#fff" stroke-width="1.4"/><circle cx="388.1" cy="554.6" r="3.6" fill="#f7a138" stroke="#fff" stroke-width="1.4"/><circle cx="413.7" cy="588.1" r="3.6" fill="#f7a138" stroke="#fff" stroke-width="1.4"/><circle cx="439.2" cy="579.8" r="3.6" fill="#f7a138" stroke="#fff" stroke-width="1.4"/><circle cx="464.8" cy="571.4" r="3.6" fill="#f7a138" stroke="#fff" stroke-width="1.4"/><circle cx="490.4" cy="529.5" r="3.6" fill="#f7a138" stroke="#fff" stroke-width="1.4"/><circle cx="515.9" cy="604.9" r="3.6" fill="#f7a138" stroke="#fff" stroke-width="1.4"/><circle cx="541.5" cy="546.2" r="3.6" fill="#f7a138" stroke="#fff" stroke-width="1.4"/><circle cx="567.1" cy="521.1" r="3.6" fill="#f7a138" stroke="#fff" stroke-width="1.4"/><circle cx="592.7" cy="563.0" r="3.6" fill="#f7a138" stroke="#fff" stroke-width="1.4"/><circle cx="618.2" cy="454.0" r="3.6" fill="#f7a138" stroke="#fff" stroke-width="1.4"/><circle cx="643.8" cy="487.6" r="3.6" fill="#f7a138" stroke="#fff" stroke-width="1.4"/><circle cx="669.4" cy="504.3" r="3.6" fill="#f7a138" stroke="#fff" stroke-width="1.4"/><circle cx="694.9" cy="596.5" r="3.6" fill="#f7a138" stroke="#fff" stroke-width="1.4"/><circle cx="720.5" cy="563.0" r="3.6" fill="#f7a138" stroke="#fff" stroke-width="1.4"/><circle cx="746.1" cy="546.2" r="3.6" fill="#f7a138" stroke="#fff" stroke-width="1.4"/><circle cx="771.6" cy="504.3" r="3.6" fill="#f7a138" stroke="#fff" stroke-width="1.4"/><circle cx="797.2" cy="529.5" r="3.6" fill="#f7a138" stroke="#fff" stroke-width="1.4"/><circle cx="822.8" cy="529.5" r="3.6" fill="#f7a138" stroke="#fff" stroke-width="1.4"/><circle cx="848.3" cy="563.0" r="3.6" fill="#f7a138" stroke="#fff" stroke-width="1.4"/><circle cx="873.9" cy="563.0" r="3.6" fill="#f7a138" stroke="#fff" stroke-width="1.4"/><circle cx="899.5" cy="512.7" r="3.6" fill="#f7a138" stroke="#fff" stroke-width="1.4"/><circle cx="925.1" cy="588.1" r="3.6" fill="#f7a138" stroke="#fff" stroke-width="1.4"/><circle cx="950.6" cy="563.0" r="3.6" fill="#f7a138" stroke="#fff" stroke-width="1.4"/><circle cx="976.2" cy="596.5" r="3.6" fill="#f7a138" stroke="#fff" stroke-width="1.4"/><circle cx="1001.8" cy="512.7" r="3.6" fill="#f7a138" stroke="#fff" stroke-width="1.4"/><circle cx="1027.3" cy="496.0" r="3.6" fill="#f7a138" stroke="#fff" stroke-width="1.4"/><circle cx="1052.9" cy="496.0" r="3.6" fill="#f7a138" stroke="#fff" stroke-width="1.4"/><circle cx="1078.5" cy="604.9" r="3.6" fill="#f7a138" stroke="#fff" stroke-width="1.4"/><circle cx="1104.0" cy="504.3" r="3.6" fill="#f7a138" stroke="#fff" stroke-width="1.4"/><circle cx="1129.6" cy="588.1" r="3.6" fill="#f7a138" stroke="#fff" stroke-width="1.4"/><circle cx="1155.2" cy="579.8" r="3.6" fill="#f7a138" stroke="#fff" stroke-width="1.4"/><circle cx="1180.7" cy="462.4" r="3.6" fill="#f7a138" stroke="#fff" stroke-width="1.4"/><circle cx="1206.3" cy="487.6" r="3.6" fill="#f7a138" stroke="#fff" stroke-width="1.4"/><circle cx="1231.9" cy="638.4" r="3.6" fill="#f7a138" stroke="#fff" stroke-width="1.4"/><circle cx="1257.5" cy="588.1" r="3.6" fill="#f7a138" stroke="#fff" stroke-width="1.4"/><circle cx="1283.0" cy="546.2" r="3.6" fill="#f7a138" stroke="#fff" stroke-width="1.4"/><circle cx="1308.6" cy="521.1" r="3.6" fill="#f7a138" stroke="#fff" stroke-width="1.4"/><circle cx="1334.2" cy="563.0" r="3.6" fill="#f7a138" stroke="#fff" stroke-width="1.4"/><circle cx="1359.7" cy="588.1" r="3.6" fill="#f7a138" stroke="#fff" stroke-width="1.4"/><circle cx="1385.3" cy="512.7" r="3.6" fill="#f7a138" stroke="#fff" stroke-width="1.4"/><circle cx="1410.9" cy="554.6" r="3.6" fill="#f7a138" stroke="#fff" stroke-width="1.4"/><circle cx="1436.4" cy="454.0" r="3.6" fill="#f7a138" stroke="#fff" stroke-width="1.4"/><circle cx="1462.0" cy="529.5" r="3.6" fill="#f7a138" stroke="#fff" stroke-width="1.4"/><circle cx="1487.6" cy="579.8" r="3.6" fill="#f7a138" stroke="#fff" stroke-width="1.4"/><circle cx="1513.2" cy="596.5" r="3.6" fill="#f7a138" stroke="#fff" stroke-width="1.4"/><circle cx="1538.7" cy="563.0" r="3.6" fill="#f7a138" stroke="#fff" stroke-width="1.4"/><circle cx="1564.3" cy="554.6" r="3.6" fill="#f7a138" stroke="#fff" stroke-width="1.4"/><circle cx="1589.9" cy="537.9" r="3.6" fill="#f7a138" stroke="#fff" stroke-width="1.4"/><circle cx="1615.4" cy="496.0" r="3.6" fill="#f7a138" stroke="#fff" stroke-width="1.4"/><circle cx="1641.0" cy="579.8" r="3.6" fill="#f7a138" stroke="#fff" stroke-width="1.4"/><text x="920.5" y="401.9" text-anchor="middle" font-family="Liberation Sans" font-size="18.5" fill="#444">1 Minute Average</text><text x="886.7" y="786.7" text-anchor="middle" font-family="Liberation Sans" font-size="13.6" fill="#555">Time ( HH:MM )</text><text transform="translate(56.2 577.4) rotate(-90)" x="0" y="0" text-anchor="middle" font-family="Liberation Sans" font-size="13.6" fill="#555">Traffic ( Kibps )</text><circle cx="1711.7" cy="432.7" r="8.6" fill="#00c2e0"/><circle cx="1711.7" cy="465" r="8.6" fill="#f7a138"/><text x="1729.5" y="442" font-family="Liberation Sans" font-size="20" fill="#4a4a4a">IN</text><text x="1728.5" y="472.8" font-family="Liberation Sans" font-size="20" fill="#4a4a4a">OUT</text></svg>
<div class="r" style="left:25px;top:827px;width:150.5px;height:153px;background:#f3f3f5;"></div>
<div class="r" style="left:175px;top:827px;width:1696px;height:50.5px;background:#f3f3f5;box-sizing:border-box;border:1px solid #e4e4e6;border-bottom:none;"></div>
<div class="r" style="left:175px;top:877px;width:1696px;height:2px;background:#dfdfe1;"></div>
<div class="r" style="left:175px;top:879px;width:1696px;height:101px;background:#fff;box-sizing:border-box;border:1px solid #e4e4e6;border-top:none;"></div>
<div class="r" style="left:176px;top:936px;width:1693px;height:1px;background:#e4e4e6;"></div>
<div class="r" style="left:419px;top:828px;width:1px;height:49px;background:#e4e4e6;"></div>
<div class="r" style="left:661px;top:828px;width:1px;height:49px;background:#e4e4e6;"></div>
<div class="r" style="left:904px;top:828px;width:1px;height:49px;background:#e4e4e6;"></div>
<div class="r" style="left:1146px;top:828px;width:1px;height:49px;background:#e4e4e6;"></div>
<div class="r" style="left:1388px;top:828px;width:1px;height:49px;background:#e4e4e6;"></div>
<div class="r" style="left:1631px;top:828px;width:1px;height:49px;background:#e4e4e6;"></div>
<div class="t" style="top:837.40px;font-size:18.6px;line-height:22.32px;color:#2a2a2a;font-family:'Liberation Sans', sans-serif;font-weight:700;letter-spacing:-1.1px;left:192.80px;width:200px;text-align:center;">Category</div>
<div class="t" style="top:837.40px;font-size:18.6px;line-height:22.32px;color:#2a2a2a;font-family:'Liberation Sans', sans-serif;font-weight:700;letter-spacing:-1.1px;left:409.80px;width:260px;text-align:center;">Total</div>
<div class="t" style="top:837.40px;font-size:18.6px;line-height:22.32px;color:#2a2a2a;font-family:'Liberation Sans', sans-serif;font-weight:700;letter-spacing:-1.1px;left:652.25px;width:260px;text-align:center;">Maximum</div>
<div class="t" style="top:837.40px;font-size:18.6px;line-height:22.32px;color:#2a2a2a;font-family:'Liberation Sans', sans-serif;font-weight:700;letter-spacing:-1.1px;left:894.75px;width:260px;text-align:center;">Minimum</div>
<div class="t" style="top:837.40px;font-size:18.6px;line-height:22.32px;color:#2a2a2a;font-family:'Liberation Sans', sans-serif;font-weight:700;letter-spacing:-1.1px;left:1137.25px;width:260px;text-align:center;">Average</div>
<div class="t" style="top:837.40px;font-size:18.6px;line-height:22.32px;color:#2a2a2a;font-family:'Liberation Sans', sans-serif;font-weight:700;letter-spacing:-1.1px;left:1379.75px;width:260px;text-align:center;">Standard Deviation</div>
<div class="t" style="top:837.40px;font-size:18.6px;line-height:22.32px;color:#2a2a2a;font-family:'Liberation Sans', sans-serif;font-weight:700;letter-spacing:-1.1px;left:1620.50px;width:260px;text-align:center;">95th Percentile</div>
<svg class="r" style="left:334px;top:846px" width="9" height="13" viewBox="0 0 9 13"><path d="M0 5 L4.5 0 L9 5 Z" fill="#555"/><path d="M0 7.5 H9 L4.5 12.5 Z" fill="#bbb"/></svg>
<div class="t" style="top:905.67px;font-size:16.2px;line-height:19.44px;color:#333;font-family:'Liberation Sans', sans-serif;left:177.00px;width:240px;text-align:center;">Traffic IN</div>
<div class="t" style="top:948.67px;font-size:16.2px;line-height:19.44px;color:#333;font-family:'Liberation Sans', sans-serif;left:177.00px;width:240px;text-align:center;">Traffic OUT</div>
<div class="t" style="top:905.67px;font-size:16.2px;line-height:19.44px;color:#333;font-family:'Liberation Sans', sans-serif;left:419.80px;width:240px;text-align:center;">108.414 MiB</div>
<div class="t" style="top:948.67px;font-size:16.2px;line-height:19.44px;color:#333;font-family:'Liberation Sans', sans-serif;left:419.80px;width:240px;text-align:center;">105.438 MiB</div>
<div class="t" style="top:905.67px;font-size:16.2px;line-height:19.44px;color:#333;font-family:'Liberation Sans', sans-serif;left:662.25px;width:240px;text-align:center;">343.750 Kibps</div>
<div class="t" style="top:948.67px;font-size:16.2px;line-height:19.44px;color:#333;font-family:'Liberation Sans', sans-serif;left:662.25px;width:240px;text-align:center;">354.167 Kibps</div>
<div class="t" style="top:905.67px;font-size:16.2px;line-height:19.44px;color:#333;font-family:'Liberation Sans', sans-serif;left:904.75px;width:240px;text-align:center;">156.250 Kibps</div>
<div class="t" style="top:948.67px;font-size:16.2px;line-height:19.44px;color:#333;font-family:'Liberation Sans', sans-serif;left:904.75px;width:240px;text-align:center;">125.000 Kibps</div>
<div class="t" style="top:905.67px;font-size:16.2px;line-height:19.44px;color:#333;font-family:'Liberation Sans', sans-serif;left:1147.25px;width:240px;text-align:center;">242.657 Kibps</div>
<div class="t" style="top:948.67px;font-size:16.2px;line-height:19.44px;color:#333;font-family:'Liberation Sans', sans-serif;left:1147.25px;width:240px;text-align:center;">235.997 Kibps</div>
<div class="t" style="top:905.67px;font-size:16.2px;line-height:19.44px;color:#333;font-family:'Liberation Sans', sans-serif;left:1389.75px;width:240px;text-align:center;">39.529 Kibps</div>
<div class="t" style="top:948.67px;font-size:16.2px;line-height:19.44px;color:#333;font-family:'Liberation Sans', sans-serif;left:1389.75px;width:240px;text-align:center;">48.831 Kibps</div>
<div class="t" style="top:905.67px;font-size:16.2px;line-height:19.44px;color:#333;font-family:'Liberation Sans', sans-serif;left:1630.50px;width:240px;text-align:center;">0.000 bps</div>
<div class="t" style="top:948.67px;font-size:16.2px;line-height:19.44px;color:#333;font-family:'Liberation Sans', sans-serif;left:1630.50px;width:240px;text-align:center;">0.000 bps</div>
<svg class="r" style="left:88px;top:873px" width="25" height="25" viewBox="0 0 25 25"><circle cx="12.5" cy="12.5" r="12" fill="none" stroke="#444" stroke-width="1.1"/><path d="M11.5 4 V14 H17" fill="none" stroke="#444" stroke-width="1.1"/></svg>
<div class="t" style="top:910.03px;font-size:17.4px;line-height:20.88px;color:#8a8a8a;font-family:'Liberation Sans', sans-serif;left:25.20px;width:150px;text-align:center;">00:00 - 00:00</div>
<div class="r" style="left:25px;top:999px;width:1845px;height:176px;overflow:hidden;">
<div class="r" style="left:0px;top:0px;width:1845px;height:50px;background:#f3f3f5;box-sizing:border-box;border:1px solid #e4e4e6;border-bottom:none;"></div>
<div class="r" style="left:0px;top:50px;width:1845px;height:2px;background:#dfdfe1;"></div>
<div class="r" style="left:0px;top:52px;width:1845px;height:200px;background:#fff;box-sizing:border-box;border-left:1px solid #e4e4e6;border-right:1px solid #e4e4e6;"></div>
<div class="r" style="left:1px;top:109px;width:1843px;height:1px;background:#e4e4e6;"></div>
<div class="r" style="left:1px;top:152px;width:1843px;height:1px;background:#e4e4e6;"></div>
<div class="r" style="left:1px;top:195px;width:1843px;height:1px;background:#e4e4e6;"></div>
<div class="t" style="top:11.10px;font-size:18.6px;line-height:22.32px;color:#2a2a2a;font-family:'Liberation Sans', sans-serif;font-weight:700;letter-spacing:-1.1px;left:10.299999999999997px;">Time</div>
<svg class="r" style="left:53.599999999999994px;top:19px" width="10" height="13" viewBox="0 0 10 13"><path d="M0 5 L4.7 0 L9.4 5 Z" fill="#bbb"/><path d="M0 7.5 H9.4 L4.7 12.7 Z" fill="#444"/></svg>
<div class="t" style="top:11.10px;font-size:18.6px;line-height:22.32px;color:#2a2a2a;font-family:'Liberation Sans', sans-serif;font-weight:700;letter-spacing:-1.1px;left:632.5px;">IN Traffic</div>
<div class="t" style="top:11.10px;font-size:18.6px;line-height:22.32px;color:#2a2a2a;font-family:'Liberation Sans', sans-serif;font-weight:700;letter-spacing:-1.1px;left:1251px;">OUT Traffic</div>
<div class="t" style="top:78.28px;font-size:16.4px;line-height:19.68px;color:#333;font-family:'Liberation Sans', sans-serif;left:13.600000000000001px;">Apr-03-23 05:09</div>
<div class="t" style="top:78.47px;font-size:16.2px;line-height:19.44px;color:#333;font-family:'Liberation Sans', sans-serif;left:632.5px;">250.000 Kibps</div>
<div class="t" style="top:78.47px;font-size:16.2px;line-height:19.44px;color:#333;font-family:'Liberation Sans', sans-serif;left:1251px;">197.917 Kibps</div>
<div class="t" style="top:121.48px;font-size:16.4px;line-height:19.68px;color:#333;font-family:'Liberation Sans', sans-serif;left:13.600000000000001px;">Apr-03-23 05:08</div>
<div class="t" style="top:121.67px;font-size:16.2px;line-height:19.44px;color:#333;font-family:'Liberation Sans', sans-serif;left:632.5px;">291.667 Kibps</div>
<div class="t" style="top:121.67px;font-size:16.2px;line-height:19.44px;color:#333;font-family:'Liberation Sans', sans-serif;left:1251px;">302.083 Kibps</div>
<div class="t" style="top:164.68px;font-size:16.4px;line-height:19.68px;color:#333;font-family:'Liberation Sans', sans-serif;left:13.600000000000001px;">Apr-03-23 05:07</div>
<div class="t" style="top:164.87px;font-size:16.2px;line-height:19.44px;color:#333;font-family:'Liberation Sans', sans-serif;left:632.5px;">260.417 Kibps</div>
<div class="t" style="top:164.87px;font-size:16.2px;line-height:19.44px;color:#333;font-family:'Liberation Sans', sans-serif;left:1251px;">250.000 Kibps</div>
<div class="t" style="top:207.88px;font-size:16.4px;line-height:19.68px;color:#333;font-family:'Liberation Sans', sans-serif;left:13.600000000000001px;">Apr-03-23 05:06</div>
<div class="t" style="top:208.07px;font-size:16.2px;line-height:19.44px;color:#333;font-family:'Liberation Sans', sans-serif;left:632.5px;">197.917 Kibps</div>
<div class="t" style="top:208.07px;font-size:16.2px;line-height:19.44px;color:#333;font-family:'Liberation Sans', sans-serif;left:1251px;">229.167 Kibps</div>
</div>
</body></html>
